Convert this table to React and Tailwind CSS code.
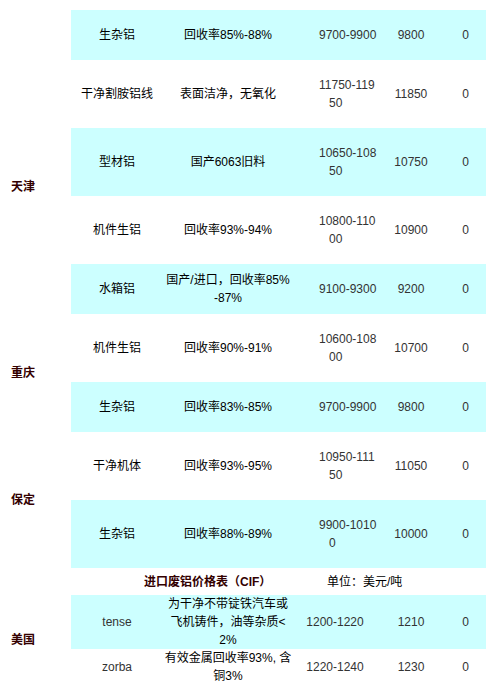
import React from 'react';

const CYAN = 'bg-[#ccffff]';

// first table: price, city groups
const rows = [
  { city: null, span: 1, name: '生杂铝', spec: ['回收率85%-88%'], price: ['9700-9900'], avg: '9800', h: 'h-[50px]', bg: true },
  { city: '天津', span: 4, name: '干净割胺铝线', spec: ['表面洁净，无氧化'], price: ['11750-119', '50'], avg: '11850', h: 'h-[68px]', bg: false },
  { name: '型材铝', spec: ['国产6063旧料'], price: ['10650-108', '50'], avg: '10750', h: 'h-[68px]', bg: true },
  { name: '机件生铝', spec: ['回收率93%-94%'], price: ['10800-110', '00'], avg: '10900', h: 'h-[68px]', bg: false },
  { name: '水箱铝', spec: ['国产/进口，回收率85%', '-87%'], price: ['9100-9300'], avg: '9200', h: 'h-[50px]', bg: true },
  { city: '重庆', span: 2, name: '机件生铝', spec: ['回收率90%-91%'], price: ['10600-108', '00'], avg: '10700', h: 'h-[68px]', bg: false },
  { name: '生杂铝', spec: ['回收率83%-85%'], price: ['9700-9900'], avg: '9800', h: 'h-[50px]', bg: true },
  { city: '保定', span: 2, name: '干净机体', spec: ['回收率93%-95%'], price: ['10950-111', '50'], avg: '11050', h: 'h-[68px]', bg: false },
  { name: '生杂铝', spec: ['回收率88%-89%'], price: ['9900-1010', '0'], avg: '10000', h: 'h-[68px]', bg: true },
];

const Price = ({ lines }) => (
  <div className="flex flex-col items-start pl-[26px] text-[#333333]">
    <span className="whitespace-nowrap">{lines[0]}</span>
    {lines[1] && <span className="whitespace-nowrap pl-[10px]">{lines[1]}</span>}
  </div>
);

export default function App() {
  return (
    <div
      className="bg-white w-[500px] h-[692px] overflow-hidden pt-[10px] text-[12px] leading-[18px] text-black"
      style={{ fontFamily: '"Liberation Sans", "Noto Sans CJK SC", sans-serif' }}
    >
      <table className="w-[486px] border-collapse table-fixed">
        <colgroup>
          <col className="w-[71px]" />
          <col className="w-[92px]" />
          <col className="w-[130px]" />
          <col className="w-[84px]" />
          <col className="w-[68px]" />
          <col className="w-[41px]" />
        </colgroup>
        <tbody>
          {rows.map((r, i) => (
            <tr key={i} className={r.h}>
              {r.city !== undefined && (
                <td rowSpan={r.span} className="p-0 pl-[11px] align-middle font-bold text-[#330000]">
                  {r.city}
                </td>
              )}
              <td className={`p-0 text-center ${r.bg ? CYAN : ''}`}>{r.name}</td>
              <td className={`p-0 text-center ${r.bg ? CYAN : ''}`}>
                {r.spec.map((s, j) => (
                  <div key={j} className="whitespace-nowrap">{s}</div>
                ))}
              </td>
              <td className={`p-0 ${r.bg ? CYAN : ''}`}>
                <Price lines={r.price} />
              </td>
              <td className={`p-0 text-center text-[#333333] ${r.bg ? CYAN : ''}`}>{r.avg}</td>
              <td className={`p-0 text-center text-[#333333] ${r.bg ? CYAN : ''}`}>0</td>
            </tr>
          ))}

          {/* imported scrap header */}
          <tr className="h-[27px]">
            <td className="p-0" />
            <td colSpan={3} className="p-0 pl-[73px] font-bold text-[#330000] whitespace-nowrap">
              进口废铝价格表（CIF）
            </td>
            <td colSpan={2} className="p-0 whitespace-nowrap">
              <span className="relative left-[-50px]">单位：美元/吨</span>
            </td>
          </tr>

          <tr className="h-[54px]">
            <td rowSpan={2} className="p-0 pl-[11px] align-middle font-bold text-[#330000]">美国</td>
            <td className={`p-0 text-center text-[#333333] ${CYAN}`}>tense</td>
            <td className={`p-0 text-center ${CYAN}`}>
              <div className="whitespace-nowrap">为干净不带锭铁汽车或</div>
              <div className="whitespace-nowrap">飞机铸件，油等杂质&lt;</div>
              <div className="whitespace-nowrap">2%</div>
            </td>
            <td className={`p-0 text-center text-[#333333] ${CYAN}`}>1200-1220</td>
            <td className={`p-0 text-center text-[#333333] ${CYAN}`}>1210</td>
            <td className={`p-0 text-center text-[#333333] ${CYAN}`}>0</td>
          </tr>
          <tr className="h-[36px]">
            <td className="p-0 text-center text-[#333333]">zorba</td>
            <td className="p-0 text-center">
              <div className="whitespace-nowrap">有效金属回收率93%, 含</div>
              <div className="whitespace-nowrap">铜3%</div>
            </td>
            <td className="p-0 text-center text-[#333333]">1220-1240</td>
            <td className="p-0 text-center text-[#333333]">1230</td>
            <td className="p-0 text-center text-[#333333]">0</td>
          </tr>
        </tbody>
      </table>
    </div>
  );
}
